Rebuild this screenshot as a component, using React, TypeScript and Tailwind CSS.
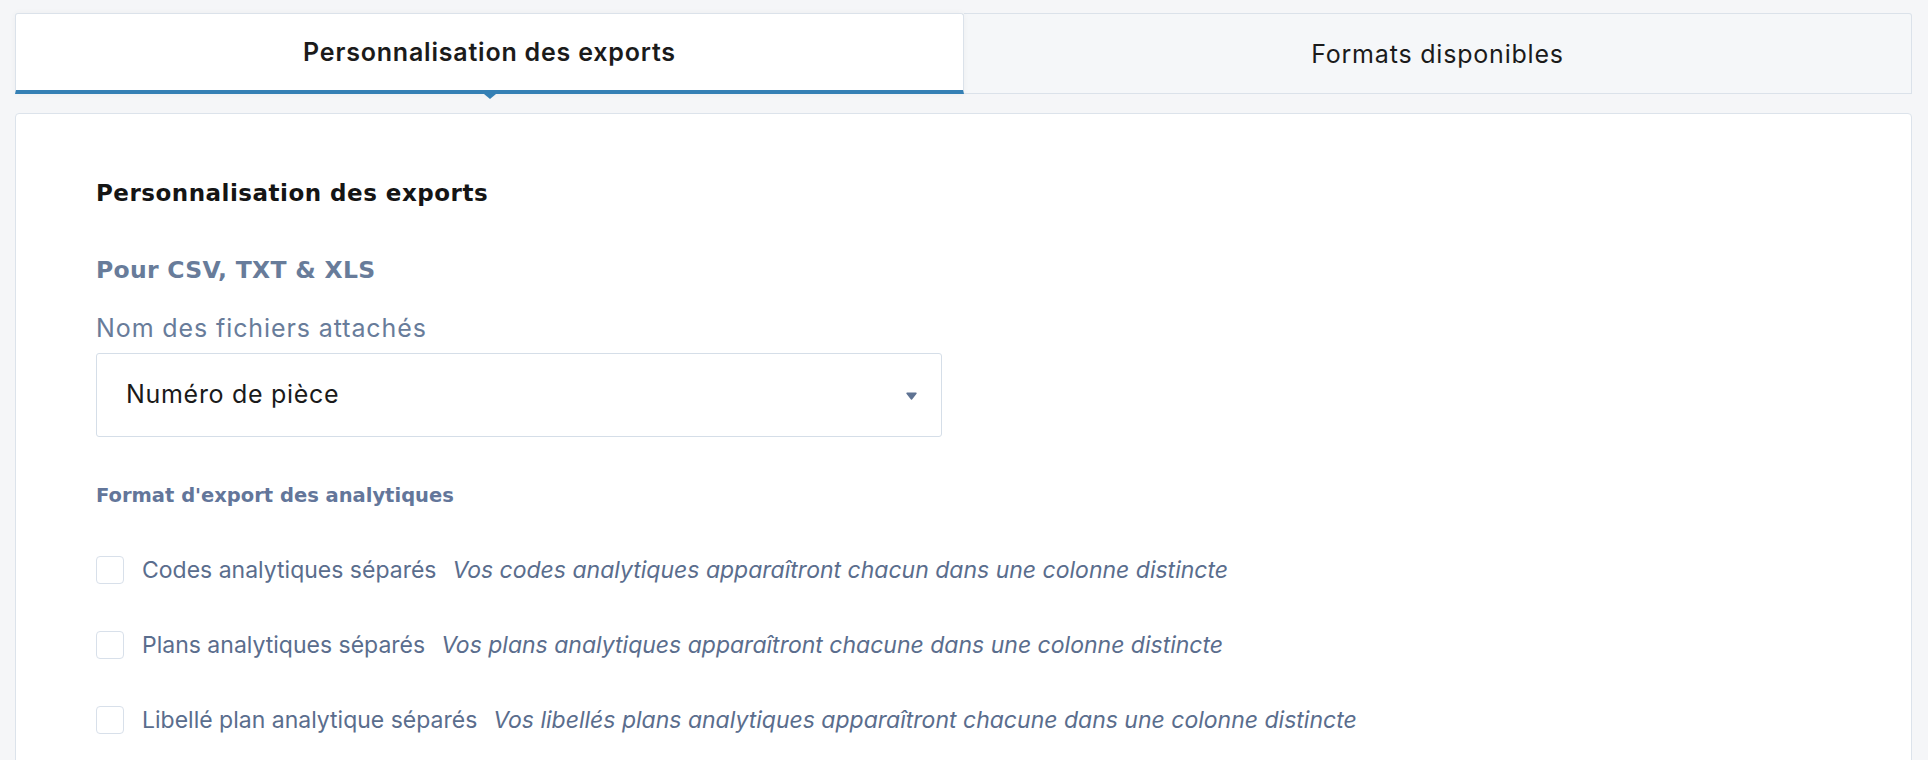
const rows = [
  {
    label: 'Codes analytiques séparés',
    hint: 'Vos codes analytiques apparaîtront chacun dans une colonne distincte',
  },
  {
    label: 'Plans analytiques séparés',
    hint: 'Vos plans analytiques apparaîtront chacune dans une colonne distincte',
  },
  {
    label: 'Libellé plan analytique séparés',
    hint: 'Vos libellés plans analytiques apparaîtront chacune dans une colonne distincte',
  },
]

function Tabs() {
  return (
    <div className="flex">
      <div className="relative flex-1 h-[81px] bg-white border border-[#dbe2ea] border-b-[4px] border-b-[#3580b5] rounded-t-[3px] shadow-[0_0_6px_rgba(0,0,0,0.04)] flex items-center justify-center">
        <span className="mt-[2px] text-[25px] tracking-[0.8px] font-semibold text-[#1b1b1b]">
          Personnalisation des exports
        </span>
        <span className="absolute left-1/2 -translate-x-1/2 -bottom-[9px] w-0 h-0 border-l-[6px] border-r-[6px] border-t-[5px] border-l-transparent border-r-transparent border-t-[#3580b5]" />
      </div>
      <div className="flex-1 h-[81px] bg-[#f5f7f9] border border-l-0 border-[#dbe2ea] rounded-tr-[3px] flex items-center justify-center">
        <span className="mt-[2px] text-[25px] tracking-[0.8px] text-[#1b1b1b]">
          Formats disponibles
        </span>
      </div>
    </div>
  )
}

function Select() {
  return (
    <div className="mt-[10px] w-[846px] h-[84px] border border-[#d5dee8] rounded-[3px] flex items-center justify-between pl-[29px] pr-[24px]">
      <span className="text-[25px] tracking-[0.7px] text-[#1a1a1a]">Numéro de pièce</span>
      <svg width="11" height="8" viewBox="0 0 11 8" className="mt-[1px]">
        <path
          d="M1 1.2 L10 1.2 L5.5 7 Z"
          fill="#5f7393"
          stroke="#5f7393"
          strokeWidth="1.4"
          strokeLinejoin="round"
        />
      </svg>
    </div>
  )
}

export default function App() {
  return (
    <div className="min-h-[760px] bg-[#f5f6f8] pt-[13px] pl-[15px] pr-[16px] font-['Inter',sans-serif]">
      <Tabs />

      <div className="mt-[19px] bg-white border border-[#dce3eb] rounded-[4px] pl-[80px] pt-[65px] pb-[60px]">
        <h2 className="text-[23px] leading-[28px] tracking-[0.5px] font-bold text-[#151515] font-['DejaVu_Sans',sans-serif]">
          Personnalisation des exports
        </h2>
        <h3 className="mt-[49px] text-[23.5px] leading-[28px] tracking-[0.3px] font-bold text-[#687c9a] font-['DejaVu_Sans',sans-serif]">
          Pour CSV, TXT &amp; XLS
        </h3>
        <div className="mt-[29px] text-[25px] leading-[30px] tracking-[0.9px] text-[#687c9a]">
          Nom des fichiers attachés
        </div>
        <Select />
        <div className="mt-[47px] text-[19.5px] leading-[24px] font-bold text-[#63769a] font-['DejaVu_Sans',sans-serif]">
          Format d&apos;export des analytiques
        </div>
        <div className="mt-[48px] flex flex-col gap-[47px]">
          {rows.map((row, i) => (
            <label key={i} className="flex items-center h-[28px]">
              <span className="w-[28px] h-[28px] border-[1.5px] border-[#d8e0ea] rounded-[4px] bg-white shrink-0" />
              <span className="ml-[18px] text-[23px] text-[#5a6d8d]">{row.label}</span>
              <span className="ml-[16px] text-[23px] italic text-[#5a6d8d]">{row.hint}</span>
            </label>
          ))}
        </div>
      </div>
    </div>
  )
}
